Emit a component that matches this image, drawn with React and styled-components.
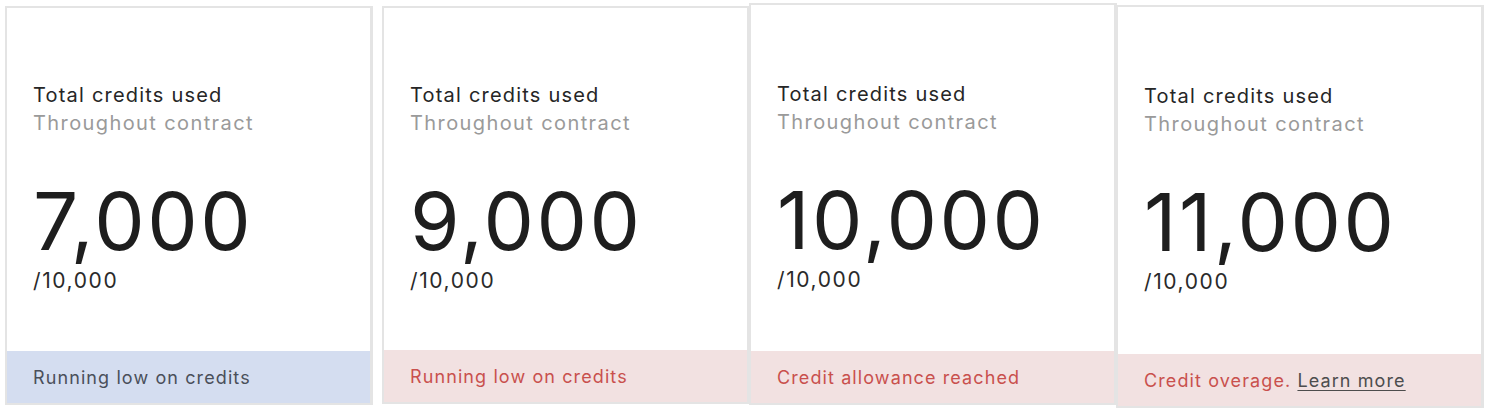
import styled, { createGlobalStyle } from "styled-components";

const GlobalStyle = createGlobalStyle`
    html, body {
        margin: 0;
        padding: 0;
        background: #ffffff;
    }
    body {
        font-family: Inter, "Noto Sans", sans-serif;
        color: #222222;
    }
`;

const cards = [
    { used: "7,000", note: "Running low on credits", tone: "info", shift: 5, top: 6, height: 399, inset: 73 },
    { used: "9,000", note: "Running low on credits", tone: "danger", shift: 9, top: 6, height: 398, inset: 73 },
    { used: "10,000", note: "Credit allowance reached", tone: "danger", shift: -1, top: 3, height: 402, inset: 75 },
    { used: "11,000", note: "Credit overage.", link: "Learn more", tone: "danger", shift: -1, top: 5, height: 403, inset: 75 },
];

const App = () => {
    return (
        <>
            <GlobalStyle />
            <Row>
                {cards.map((card) => (
                    <Card key={card.used} $shift={card.shift} $top={card.top} $height={card.height}>
                        <Body $inset={card.inset}>
                            <Title>Total credits used</Title>
                            <Subtitle>Throughout contract</Subtitle>
                            <Amount>{card.used}</Amount>
                            <Limit>/10,000</Limit>
                        </Body>
                        <Footer $tone={card.tone}>
                            {card.note}
                            {card.link && (
                                <>
                                    {" "}
                                    <FooterLink href="#">{card.link}</FooterLink>
                                </>
                            )}
                        </Footer>
                    </Card>
                ))}
            </Row>
        </>
    );
};

const Row = styled.div`
    display: flex;
    align-items: flex-start;
    width: 1486px;
`;

const Card = styled.section`
    display: flex;
    flex-direction: column;
    flex: 0 0 368px;
    height: ${(p) => p.$height}px;
    margin-left: ${(p) => p.$shift}px;
    margin-top: ${(p) => p.$top}px;
    box-sizing: border-box;
    border: 2px solid #e4e4e4;
    border-right-width: 3px;
    background: #ffffff;
`;

const Body = styled.div`
    display: flex;
    flex-direction: column;
    padding: ${(p) => p.$inset}px 0 0 26px;
    flex: 1;
`;

const Title = styled.div`
    font-size: 20px;
    line-height: 28px;
    color: #262626;
    letter-spacing: 1.2px;
`;

const Subtitle = styled.div`
    font-size: 20px;
    line-height: 28px;
    color: #9a9a9a;
    letter-spacing: 1.4px;
`;

const Amount = styled.div`
    margin-top: 44px;
    font-size: 80px;
    line-height: 80px;
    font-weight: 400;
    color: #1e1e1e;
    letter-spacing: 2.5px;
`;

const Limit = styled.div`
    margin-top: 8px;
    font-size: 21px;
    line-height: 24px;
    color: #2a2a2a;
    letter-spacing: 1.6px;
`;

const Footer = styled.div`
    display: flex;
    align-items: center;
    height: 52px;
    padding-left: 26px;
    font-size: 18px;
    letter-spacing: 1.1px;
    background: ${(p) => (p.$tone === "info" ? "#d4ddf0" : "#f2e1e1")};
    color: ${(p) => (p.$tone === "info" ? "#4a4f5a" : "#c9504d")};
    white-space: pre;
`;

const FooterLink = styled.a`
    color: #4d4d4d;
    text-decoration: underline;
    text-underline-offset: 3px;
`;

export default App;
